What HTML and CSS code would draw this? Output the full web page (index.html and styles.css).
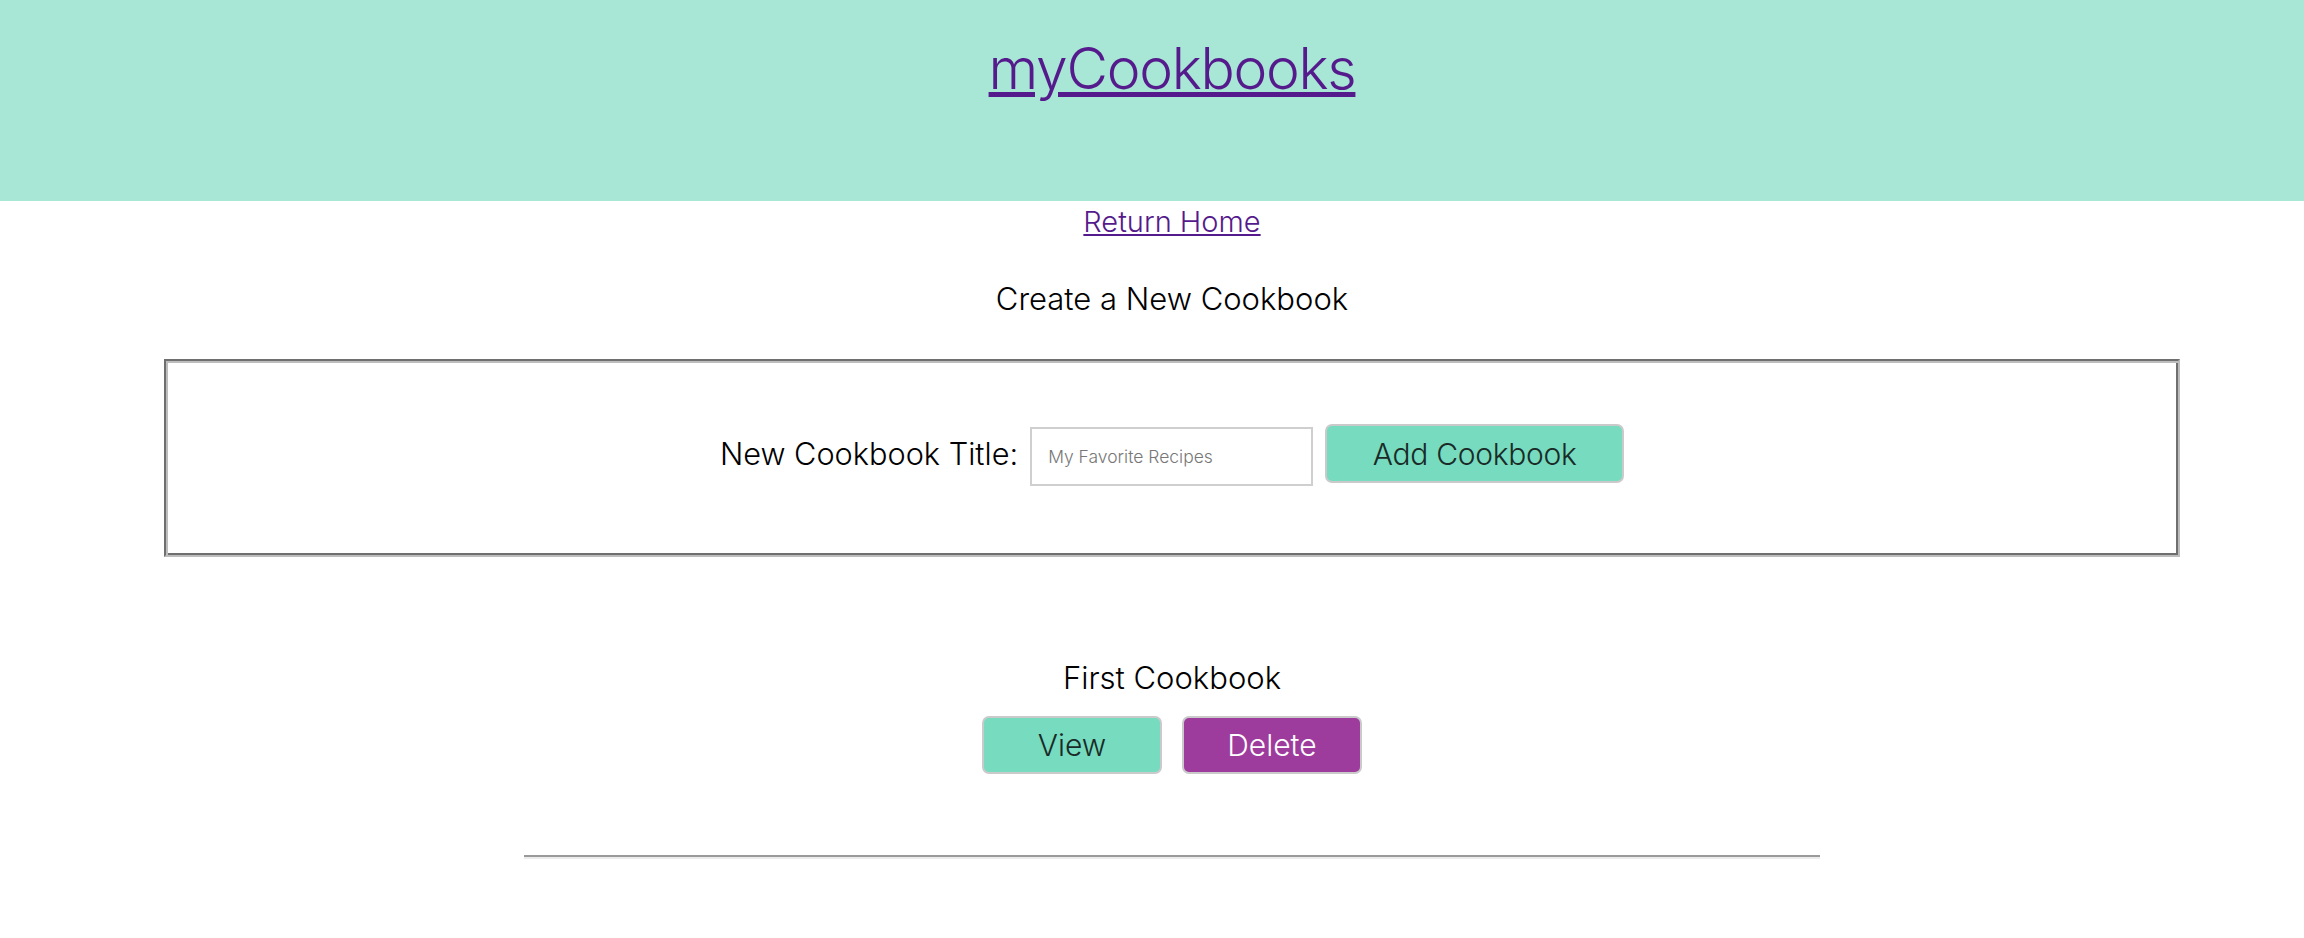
FILE: index.html
```html
<!DOCTYPE html>
<html lang="en">
<head>
<meta charset="utf-8">
<title>myCookbooks</title>
<link rel="stylesheet" href="styles.css">
</head>
<body>
<header class="site-header">
  <h1 class="brand"><a href="#" class="brand-link">myCookbooks</a></h1>
</header>
<main class="page">
  <a href="#" class="return-link">Return Home</a>
  <h2 class="section-title">Create a New Cookbook</h2>
  <fieldset class="create-box">
    <form class="create-row">
      <label class="create-label" for="title">New Cookbook Title:</label>
      <input class="create-input" id="title" type="text" placeholder="My Favorite Recipes">
      <button class="btn btn-green btn-add" type="button">Add Cookbook</button>
    </form>
  </fieldset>
  <section class="cookbook">
    <h3 class="cookbook-title">First Cookbook</h3>
    <div class="cookbook-actions">
      <button class="btn btn-green btn-small" type="button">View</button>
      <button class="btn btn-purple btn-small" type="button">Delete</button>
    </div>
  </section>
  <hr class="divider">
</main>
</body>
</html>
```

FILE: styles.css
```css
html, body {
  margin: 0;
  padding: 0;
  background: #ffffff;
}

body {
  font-family: Inter, "Noto Sans", sans-serif;
  font-weight: 300;
  color: #000000;
}

.site-header {
  background: #a8e7d6;
  height: 201px;
  box-sizing: border-box;
  padding: 34px 0 0 40px;
  text-align: center;
}

.brand {
  margin: 0;
  font-size: 57px;
  line-height: 70px;
  font-weight: 300;
  letter-spacing: -1.3px;
}

.brand-link,
.return-link {
  color: #551a8b;
  text-decoration: underline;
}

.page {
  padding-left: 40px;
  text-align: center;
}

.return-link {
  display: inline-block;
  margin-top: 3px;
  font-size: 29px;
  line-height: 35px;
  text-underline-offset: 2px;
}

.section-title {
  margin: 41px 0 0;
  font-size: 31px;
  line-height: 37px;
  font-weight: 300;
}

.create-box {
  margin: 42px 124px 0;
  height: 198px;
  box-sizing: border-box;
  padding: 63px 0 0;
  border-style: solid;
  border-width: 2px;
  border-color: #6f6f6f #bdbdbd #bdbdbd #6f6f6f;
  box-shadow: inset 2px 2px 0 #bdbdbd, inset -2px -2px 0 #6f6f6f;
}

.create-row {
  display: flex;
  justify-content: center;
  align-items: flex-start;
  gap: 12px;
}

.create-label {
  margin-top: 11px;
  font-size: 30.7px;
  line-height: 37px;
}

.create-input {
  margin-top: 3px;
  width: 283px;
  height: 59px;
  box-sizing: border-box;
  padding: 0 16px;
  border: 2px solid #cfcfcf;
  font-family: Inter, "Noto Sans", sans-serif;
  font-weight: 300;
  font-size: 17.5px;
  color: #222;
  background: #fff;
}

.create-input::placeholder {
  color: #777777;
}

.btn {
  box-sizing: border-box;
  height: 59px;
  border: 2px solid #cacaca;
  border-radius: 7px;
  font-family: Inter, "Noto Sans", sans-serif;
  font-weight: 300;
  font-size: 30px;
  line-height: 36px;
  cursor: pointer;
}

.btn-green {
  background: #76dbbf;
  color: #1a2b27;
}

.btn-purple {
  background: #9e3c9d;
  color: #ffffff;
}

.btn-add {
  width: 299px;
  padding: 0;
  letter-spacing: -0.3px;
}

.cookbook {
  margin-top: 102px;
}

.cookbook-title {
  margin: 0;
  font-size: 31px;
  line-height: 37px;
  font-weight: 300;
}

.cookbook-actions {
  margin-top: 20px;
  display: flex;
  justify-content: center;
  gap: 20px;
}

.btn-small {
  width: 180px;
  height: 58px;
  padding: 0;
}

.divider {
  width: 1296px;
  height: 0;
  margin: 81px auto 0;
  border: 0;
  border-top: 2px solid #9a9a9a;
  border-bottom: 2px solid #ececec;
}
```
